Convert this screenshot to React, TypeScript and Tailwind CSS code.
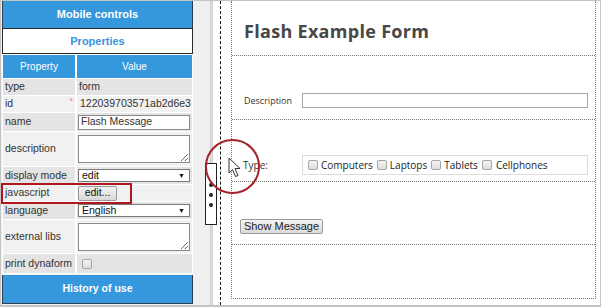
import type { ReactNode } from 'react';

const sans = "font-['Liberation_Sans',Arial,sans-serif]";
const open = "font-['Open_Sans','Liberation_Sans',sans-serif]";

function FakeSelect({ value }: { value: string }) {
  return (
    <div className="ml-[1px] h-[13px] w-[112px] bg-white border border-[#7a7a7a] flex items-center justify-between pl-[3px] pr-[4px] text-[10.5px] leading-none text-[#111]">
      <span>{value}</span>
      <span className="text-[7px]">▼</span>
    </div>
  );
}

function Area() {
  return (
    <textarea
      readOnly
      className="ml-[1px] block h-[28px] w-[112px] bg-white border border-[#8a8a8a] outline-none"
    />
  );
}

function Check({ className = '' }: { className?: string }) {
  return (
    <div
      className={`w-[10px] h-[10px] rounded-[2px] border border-[#a5a5a5] bg-gradient-to-b from-[#f4f4f4] to-[#dedede] ${className}`}
    />
  );
}

type Row = { label: string; h: string; odd: boolean; value: ReactNode; star?: boolean };

const rows: Row[] = [
  { label: 'type', h: 'h-[16px]', odd: true, value: <span className="pl-[2px]">form</span> },
  {
    label: 'id',
    h: 'h-[16px]',
    odd: false,
    star: true,
    value: <span className="pl-[3px] whitespace-nowrap">122039703571ab2d6e3</span>,
  },
  {
    label: 'name',
    h: 'h-[18px]',
    odd: true,
    value: (
      <div className="ml-[1px] h-[15px] w-[112px] bg-white border border-[#8a8a8a] pl-[2px] flex items-center">
        Flash Message
      </div>
    ),
  },
  { label: 'description', h: 'h-[34px]', odd: false, value: <Area /> },
  { label: 'display mode', h: 'h-[17px]', odd: true, value: <FakeSelect value="edit" /> },
  {
    label: 'javascript',
    h: 'h-[16px]',
    odd: false,
    value: (
      <div className="ml-[1px] h-[15px] w-[39px] rounded-[2px] border border-[#9a9a9a] bg-gradient-to-b from-[#f2f2f2] to-[#d9d9d9] flex items-center justify-center text-[#111]">
        edit...
      </div>
    ),
  },
  { label: 'language', h: 'h-[17px]', odd: true, value: <FakeSelect value="English" /> },
  { label: 'external libs', h: 'h-[33px]', odd: false, value: <Area /> },
  { label: 'print dynaform', h: 'h-[19px]', odd: true, value: <Check className="ml-[5px]" /> },
];

function LeftPanel() {
  return (
    <div className={`ml-[1px] w-[191px] flex flex-col ${sans}`}>
      <div className="h-[27px] bg-[#3598dc] border-l border-r border-[#2c3e50] flex items-center justify-center text-white font-bold text-[11px]">
        Mobile controls
      </div>
      <div className="h-[26px] bg-white border border-[#2a2a2a] flex items-center justify-center text-[#3a94d8] font-bold text-[11px]">
        Properties
      </div>
      <div className="bg-white p-[1px] grid grid-cols-[72px_115px] gap-x-[2px] gap-y-[1px] text-[10.5px] text-[#333]">
        <div className="h-[23px] bg-[#3598dc] text-white text-[10px] flex items-center justify-center">
          Property
        </div>
        <div className="h-[23px] bg-[#3598dc] text-white text-[10px] flex items-center justify-center">
          Value
        </div>
        {rows.map((r) => (
          <div key={r.label} className="contents">
            <div
              className={`${r.h} ${r.odd ? 'bg-[#e4e4e4]' : 'bg-[#f1f1f1]'} flex items-center justify-between pl-[2px] pr-[2px]`}
            >
              <span>{r.label}</span>
              {r.star && <span className="text-[#f07c7c] text-[9px] mb-[4px]">*</span>}
            </div>
            <div className={`${r.h} ${r.odd ? 'bg-[#e4e4e4]' : 'bg-[#f1f1f1]'} flex items-center overflow-hidden`}>
              {r.value}
            </div>
          </div>
        ))}
      </div>
      <div className="mt-[1px] h-[29px] bg-[#3598dc] border-l border-r border-b border-[#2c3e50] flex items-center justify-center text-white font-bold text-[10.5px]">
        History of use
      </div>
    </div>
  );
}

function Splitter() {
  return (
    <div className="relative w-[3px] bg-gradient-to-r from-[#c4c4c4] via-[#e2e2e2] to-[#c4c4c4]">
      <div className="absolute left-[-5px] top-[162px] w-[12px] h-[62px] bg-white border border-[#222] flex flex-col items-center pt-[19px] gap-[6px]">
        <span className="w-[4px] h-[4px] rounded-full bg-[#222]" />
        <span className="w-[4px] h-[4px] rounded-full bg-[#222]" />
        <span className="w-[4px] h-[4px] rounded-full bg-[#222]" />
      </div>
    </div>
  );
}

function FormArea() {
  return (
    <div className="flex-1 bg-white flex">
      <div className="ml-[7px] border-l border-dashed border-[#111]" />
      <div className={`ml-[10px] w-[365px] h-[298px] border-l border-r border-b border-dotted border-[#7a7a7a] flex flex-col ${open}`}>
        <div className="h-[55px] border-b border-dotted border-[#7a7a7a] pl-[12px] pt-[18px]">
          <h1 className="text-[18px] leading-[24px] font-bold tracking-[0.3px] text-[#474747]">Flash Example Form</h1>
        </div>
        <div className="h-[64px] border-b border-dotted border-[#7a7a7a] pt-[37px] pl-[12px] pr-[7px] flex items-start">
          <span className="w-[58px] h-[15px] flex items-center text-[9px] text-[#333]">Description</span>
          <div className="flex-1 h-[15px] border border-[#a8a8a8] bg-white" />
        </div>
        <div className="h-[62px] border-b border-dotted border-[#7a7a7a] pt-[35px] pl-[11px] pr-[7px] flex items-start">
          <span className="w-[59px] h-[20px] flex items-center text-[10px] text-[#333]">Type:</span>
          <div className="flex-1 h-[20px] border border-[#dcdcdc] flex items-center pl-[5px] text-[10px] text-[#222]">
            <Check />
            <span className="ml-[3px] mr-[4px]">Computers</span>
            <Check />
            <span className="ml-[3px] mr-[4px]">Laptops</span>
            <Check />
            <span className="ml-[3px] mr-[4px]">Tablets</span>
            <Check />
            <span className="ml-[4px]">Cellphones</span>
          </div>
        </div>
        <div className="h-[63px] border-b border-dotted border-[#7a7a7a] pt-[37px] pl-[8px]">
          <button
            className={`block h-[15px] w-[83px] rounded-[2px] border border-[#9a9a9a] bg-gradient-to-b from-[#f4f4f4] to-[#dadada] text-[11px] leading-none text-[#222] ${sans}`}
          >
            Show Message
          </button>
        </div>
        <div className="flex-1" />
      </div>
    </div>
  );
}

export default function App() {
  return (
    <div className="relative w-[601px] h-[307px] overflow-hidden bg-[#efefef] border-t border-l border-r border-b-2 border-[#c4c4c4] flex">
      <LeftPanel />
      <div className="w-[17px]" />
      <Splitter />
      <FormArea />

      {/* highlight around javascript row */}
      <div className="absolute left-0 top-[182px] w-[131px] h-[21px] border-2 border-[#b0161e]" />

      {/* click indicator */}
      <div className="absolute left-[204px] top-[138px] w-[55px] h-[55px] rounded-full border-2 border-[#a3222b]" />
      <svg className="absolute left-[227px] top-[156px]" width="14" height="22" viewBox="0 0 14 22">
        <path
          d="M1 1 L1 16 L4.5 12.5 L7.5 19.5 L10 18.5 L7 11.5 L12 11.5 Z"
          fill="#fff"
          stroke="#333"
          strokeWidth="1"
          strokeLinejoin="round"
        />
      </svg>
    </div>
  );
}
